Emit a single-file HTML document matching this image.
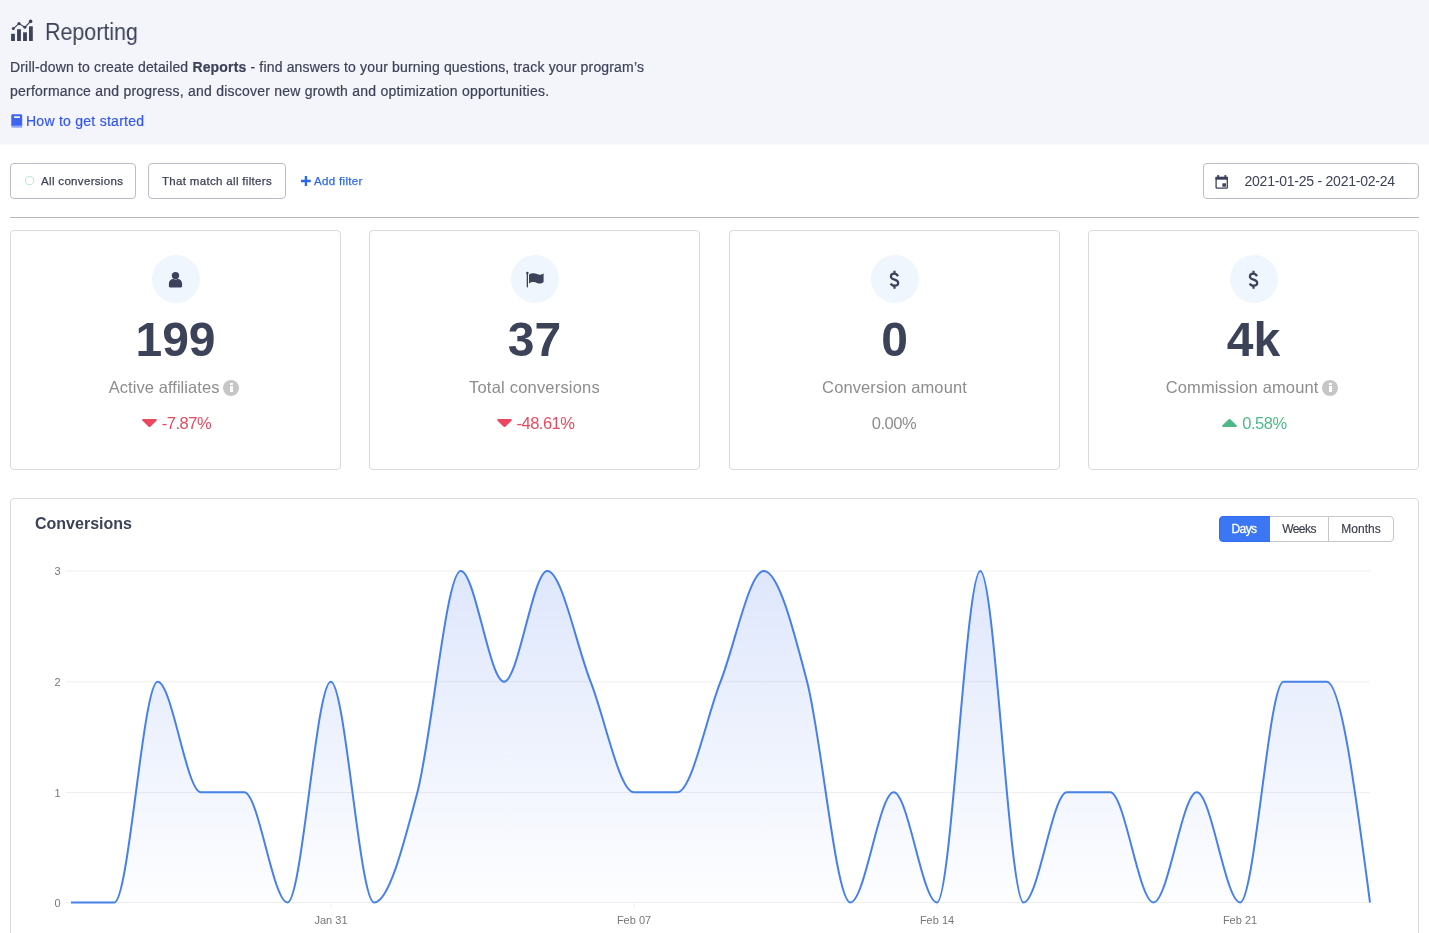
<!DOCTYPE html>
<html><head><meta charset="utf-8"><title>Reporting</title>
<style>
*{box-sizing:border-box;margin:0;padding:0}
html,body{width:1429px;height:933px;overflow:hidden;background:#fff}
body{font-family:"Liberation Sans",sans-serif;color:#3c4257;position:relative}
.abs{position:absolute;white-space:nowrap;will-change:transform}
#hdr{left:0;top:0;width:1429px;height:145px;background:linear-gradient(#f4f5fa,#f4f5fa 144px,#fafafd 144px)}
#title{left:45px;top:14.5px;font-size:23.5px;line-height:34px;color:#3c4257;transform:scaleX(0.912);transform-origin:0 0}
.desc{left:10px;font-size:14px;line-height:24px;color:#3c4257;-webkit-text-stroke:0.2px #3c4257}
#link{left:26px;top:109px;font-size:14px;line-height:24px;color:#3357f0;letter-spacing:0.26px;-webkit-text-stroke:0.2px #3357f0}
.btn{top:163px;height:36px;border:1px solid #babcc6;border-radius:4px;background:#fff;font-size:11.5px;line-height:34px;color:#3c4257;-webkit-text-stroke:0.25px #3c4257}
#hr{left:10px;top:217px;width:1409px;height:1px;background:#b9bac0}
.card{top:230px;width:331px;height:240px;border:1px solid #dadada;border-radius:4px;background:#fff}
.circ{position:absolute;left:50%;margin-left:-24px;top:24px;width:48px;height:48px;border-radius:50%;background:#eff6fe}
.num{position:absolute;left:0;right:0;text-align:center;top:81px;font-size:48px;line-height:56px;font-weight:bold;color:#3c4257}
.lbl{position:absolute;left:0;right:0;text-align:center;top:144px;font-size:16.5px;line-height:24px;color:#8d8d8d}
.pct{position:absolute;left:2px;right:0;text-align:center;top:180px;font-size:16.5px;line-height:24px;letter-spacing:-0.5px}
.red{color:#e9485e}.green{color:#4cb986}.grey{color:#8d8d8d}
.info{display:inline-block;vertical-align:top;width:16px;height:16px;border-radius:50%;background:#c6c6c6;margin-left:3.8px;margin-top:4.5px;position:relative}
.info:before{content:"";position:absolute;left:7px;top:3.6px;width:2.2px;height:2px;background:#fff}
.info:after{content:"";position:absolute;left:7px;top:6.7px;width:2.2px;height:6px;background:#fff}
.tri{display:inline-block;vertical-align:top;width:15px;height:8px;margin-right:5px;margin-top:8px}
#chart{left:10px;top:498px;width:1409px;height:460px;border:1px solid #dadada;border-radius:4px;background:#fff}
.seg{top:516px;height:26px;border:1px solid #c6c7cc;font-size:12px;line-height:25.6px;text-align:center;color:#383c4a;-webkit-text-stroke:0.15px #383c4a;background:#fff}
.ax{font-size:11px;line-height:12px;color:#777}
</style></head>
<body>
<div class="abs" id="hdr"></div>
<svg class="abs" style="left:0;top:0" width="60" height="60" viewBox="0 0 60 60">
<g fill="#3c4259"><rect x="11.1" y="33.8" width="3.8" height="7.2"/><rect x="17.1" y="29.2" width="3.8" height="11.8"/><rect x="23.1" y="32.3" width="3.8" height="8.7"/><rect x="29" y="26.3" width="3.8" height="14.7"/>
<circle cx="13.3" cy="28.6" r="1.5"/><circle cx="19" cy="23.6" r="1.6"/><circle cx="24.9" cy="27.2" r="1.5"/><circle cx="30.6" cy="21.4" r="1.8"/></g>
<polyline points="13.3,28.6 19,23.6 24.9,27.2 30.6,21.4" fill="none" stroke="#3c4259" stroke-width="1.1"/>
</svg>
<div class="abs" id="title">Reporting</div>
<div class="abs desc" style="top:55px;letter-spacing:0.165px">Drill-down to create detailed <b>Reports</b> - find answers to your burning questions, track your program’s</div>
<div class="abs desc" style="top:79px;letter-spacing:0.23px">performance and progress, and discover new growth and optimization opportunities.</div>
<svg class="abs" style="left:10px;top:112px" width="14" height="18" viewBox="10 112 14 18">
<path d="M12.6 114.2h8.3a1.3 1.3 0 0 1 1.3 1.3v9.6h-10.9v-9.6a1.3 1.3 0 0 1 1.3-1.3z" fill="#4064f2"/>
<path d="M11.3 125.1h10.9v2.7h-9.6a1.3 1.3 0 0 1-1.3-1.3z" fill="#94a8f6"/>
<rect x="11.3" y="124.4" width="10.9" height="1.2" fill="#4064f2"/>
<rect x="14" y="116.3" width="6" height="1.7" fill="#f4f5fa"/>
</svg>
<div class="abs" id="link">How to get started</div>

<div class="abs btn" style="left:10px;width:126px;padding-left:30px;letter-spacing:0.33px">All conversions</div>
<svg class="abs" style="left:24px;top:175px" width="12" height="12"><circle cx="5.6" cy="5.6" r="4.1" fill="none" stroke="#b5e5d0" stroke-width="1"/></svg>
<div class="abs btn" style="left:148px;width:138px;text-align:center;letter-spacing:0.33px">That match all filters</div>
<svg class="abs" style="left:300px;top:175px" width="12" height="12"><path d="M1 6h9.8M5.9 1.1v9.8" stroke="#2b67ec" stroke-width="2.3" fill="none"/></svg>
<div class="abs" style="left:314px;top:163px;font-size:11.5px;line-height:36px;color:#2b67ec;letter-spacing:0.33px;-webkit-text-stroke:0.25px #2b67ec">Add filter</div>
<div class="abs btn" style="left:1203px;width:216px;padding-left:40.5px;font-size:14px;line-height:34px;letter-spacing:-0.23px;-webkit-text-stroke:0">2021-01-25 - 2021-02-24</div>
<svg class="abs" style="left:1213px;top:173px" width="18" height="18" viewBox="1213 173 18 18">
<rect x="1216.1" y="177.5" width="11.2" height="10.7" rx="0.6" fill="none" stroke="#3c4259" stroke-width="1.3"/>
<rect x="1215.5" y="176.9" width="12.4" height="2.8" fill="#3c4259"/>
<rect x="1217.2" y="175.1" width="1.9" height="2.5" fill="#3c4259"/><rect x="1224.4" y="175.1" width="1.9" height="2.5" fill="#3c4259"/>
<rect x="1222.4" y="183.3" width="3.5" height="3.5" fill="#3c4259"/>
</svg>
<div class="abs" id="hr"></div>

<div class="abs card" style="left:10px"><div class="circ"></div><div class="num">199</div><div class="lbl" style="left:-3px;letter-spacing:0.07px">Active affiliates<span class="info"></span></div>
<div class="pct red"><svg class="tri" viewBox="0 0 15 8"><path d="M1.2 0h12.6a1 1 0 0 1 .7 1.7l-6.2 6a1.1 1.1 0 0 1-1.6 0l-6.2-6a1 1 0 0 1 .7-1.7z" fill="#e9485e"/></svg>-7.87%</div></div>
<div class="abs card" style="left:369px"><div class="circ"></div><div class="num">37</div><div class="lbl" style="letter-spacing:0.2px">Total conversions</div>
<div class="pct red"><svg class="tri" viewBox="0 0 15 8"><path d="M1.2 0h12.6a1 1 0 0 1 .7 1.7l-6.2 6a1.1 1.1 0 0 1-1.6 0l-6.2-6a1 1 0 0 1 .7-1.7z" fill="#e9485e"/></svg>-48.61%</div></div>
<div class="abs card" style="left:729px"><div class="circ"></div><div class="num">0</div><div class="lbl" style="letter-spacing:0.1px">Conversion amount</div><div class="pct grey" style="left:-1px">0.00%</div></div>
<div class="abs card" style="left:1088px"><div class="circ"></div><div class="num">4k</div><div class="lbl" style="left:-3px;letter-spacing:0.15px">Commission amount<span class="info"></span></div>
<div class="pct green"><svg class="tri" viewBox="0 0 15 8"><path d="M1.2 8h12.6a1 1 0 0 0 .7-1.7l-6.2-6a1.1 1.1 0 0 0-1.6 0l-6.2 6a1 1 0 0 0 .7 1.7z" fill="#4cb986"/></svg>0.58%</div></div>

<svg class="abs" style="left:0;top:250px" width="1429" height="60" viewBox="0 250 1429 60">
<g fill="#3c4259">
<circle cx="175.5" cy="275.6" r="3.7"/>
<path d="M168.9 286.200V283.500C168.900 280.800 171 278.900 173.300 278.900H173.700C174.300 279.300 174.900 279.500 175.500 279.500C176.100 279.500 176.700 279.300 177.300 278.900H177.700C180 278.900 182.100 280.800 182.100 283.500V286.200C182.100 286.900 181.600 287.400 180.900 287.400H170.100C169.400 287.400 168.900 286.900 168.900 286.200z"/>
<rect x="526.7" y="272.4" width="1.3" height="15" rx="0.6"/><circle cx="527.35" cy="273" r="1.2"/>
<path d="M529 274.600C531.500 272.800 534.500 272.800 537 274C539.500 275.200 541.500 274.800 543.600 273.200V282C541.500 283.600 539.500 284 537 282.900C534.500 281.700 531.500 281.700 529 283.500z"/>
</g>
<g fill="none" stroke="#3c4259" stroke-width="2.2">
<path id="dol" d="M898 276.300C897.100 274.500 895.700 273.700 894.200 273.700C892.100 273.700 890.900 274.900 890.900 276.400C890.900 278.200 892.400 278.900 894.600 279.600C896.800 280.300 898.200 281.100 898.200 283C898.200 284.700 896.800 285.700 894.800 285.700C893 285.700 891.500 285 890.700 283.400M894.500 270.800V273.900M894.500 285.500V288.800"/>
<use href="#dol" x="359"/>
</g>
</svg>

<div class="abs" id="chart"></div>
<div class="abs" style="left:35px;top:512px;font-size:16px;line-height:24px;font-weight:bold;color:#3c4257">Conversions</div>
<div class="abs seg" style="left:1219px;width:52px;border-radius:4px 0 0 4px;background:#3b76f5;border-color:#316df0;color:#fff;letter-spacing:-0.6px;padding-right:2px;-webkit-text-stroke:0.3px #fff">Days</div>
<div class="abs seg" style="left:1270px;width:59px;border-left:0;letter-spacing:-0.55px">Weeks</div>
<div class="abs seg" style="left:1328px;width:66px;border-radius:0 4px 4px 0">Months</div>

<svg class="abs" style="left:0;top:0" width="1429" height="933" viewBox="0 0 1429 933">
<defs><linearGradient id="g" x1="0" y1="571" x2="0" y2="903" gradientUnits="userSpaceOnUse">
<stop offset="0" stop-color="#4a78ec" stop-opacity="0.18"/><stop offset="1" stop-color="#4a78ec" stop-opacity="0.01"/></linearGradient></defs>
<g stroke="#efefef" stroke-width="1">
<line x1="66" y1="571" x2="1370" y2="571"/><line x1="66" y1="681.8" x2="1370" y2="681.8"/><line x1="66" y1="792.5" x2="1370" y2="792.5"/><line x1="66" y1="902.5" x2="1370" y2="902.5"/>
<line x1="330.8" y1="903" x2="330.8" y2="908"/><line x1="633.9" y1="903" x2="633.9" y2="908"/><line x1="937" y1="903" x2="937" y2="908"/><line x1="1240.1" y1="903" x2="1240.1" y2="908"/>
</g>
<path d="M71.00 902.50C85.43 902.50 99.87 902.50 114.30 902.50C128.73 902.50 143.17 681.70 157.60 681.70C172.03 681.70 186.47 792.30 200.90 792.30C215.33 792.30 229.77 792.30 244.20 792.30C258.63 792.30 273.07 902.50 287.50 902.50C301.93 902.50 316.37 681.70 330.80 681.70C345.23 681.70 359.67 902.50 374.10 902.50C388.53 902.50 402.97 847.55 417.40 792.30C431.83 737.05 446.27 571.00 460.70 571.00C475.13 571.00 489.57 681.70 504.00 681.70C518.43 681.70 532.87 571.00 547.30 571.00C561.73 571.00 576.17 644.82 590.60 681.70C605.03 718.58 619.47 792.30 633.90 792.30C648.33 792.30 662.77 792.30 677.20 792.30C691.63 792.30 706.07 718.58 720.50 681.70C734.93 644.82 749.37 571.00 763.80 571.00C778.23 571.00 792.67 626.45 807.10 681.70C821.53 736.95 835.97 902.50 850.40 902.50C864.83 902.50 879.27 792.30 893.70 792.30C908.13 792.30 922.57 902.50 937.00 902.50C951.43 902.50 965.87 571.00 980.30 571.00C994.73 571.00 1009.17 902.50 1023.60 902.50C1038.03 902.50 1052.47 792.30 1066.90 792.30C1081.33 792.30 1095.77 792.30 1110.20 792.30C1124.63 792.30 1139.07 902.50 1153.50 902.50C1167.93 902.50 1182.37 792.30 1196.80 792.30C1211.23 792.30 1225.67 902.50 1240.10 902.50C1254.53 902.50 1268.97 681.70 1283.40 681.70C1297.83 681.70 1312.27 681.70 1326.70 681.70C1341.13 681.70 1355.57 792.10 1370.00 902.50L1370 902.5L71 902.5Z" fill="url(#g)"/>
<path d="M71.00 902.50C85.43 902.50 99.87 902.50 114.30 902.50C128.73 902.50 143.17 681.70 157.60 681.70C172.03 681.70 186.47 792.30 200.90 792.30C215.33 792.30 229.77 792.30 244.20 792.30C258.63 792.30 273.07 902.50 287.50 902.50C301.93 902.50 316.37 681.70 330.80 681.70C345.23 681.70 359.67 902.50 374.10 902.50C388.53 902.50 402.97 847.55 417.40 792.30C431.83 737.05 446.27 571.00 460.70 571.00C475.13 571.00 489.57 681.70 504.00 681.70C518.43 681.70 532.87 571.00 547.30 571.00C561.73 571.00 576.17 644.82 590.60 681.70C605.03 718.58 619.47 792.30 633.90 792.30C648.33 792.30 662.77 792.30 677.20 792.30C691.63 792.30 706.07 718.58 720.50 681.70C734.93 644.82 749.37 571.00 763.80 571.00C778.23 571.00 792.67 626.45 807.10 681.70C821.53 736.95 835.97 902.50 850.40 902.50C864.83 902.50 879.27 792.30 893.70 792.30C908.13 792.30 922.57 902.50 937.00 902.50C951.43 902.50 965.87 571.00 980.30 571.00C994.73 571.00 1009.17 902.50 1023.60 902.50C1038.03 902.50 1052.47 792.30 1066.90 792.30C1081.33 792.30 1095.77 792.30 1110.20 792.30C1124.63 792.30 1139.07 902.50 1153.50 902.50C1167.93 902.50 1182.37 792.30 1196.80 792.30C1211.23 792.30 1225.67 902.50 1240.10 902.50C1254.53 902.50 1268.97 681.70 1283.40 681.70C1297.83 681.70 1312.27 681.70 1326.70 681.70C1341.13 681.70 1355.57 792.10 1370.00 902.50" fill="none" stroke="#4680e8" stroke-width="2"/>
</svg>
<div class="abs ax" style="left:40px;width:20.5px;text-align:right;top:565px">3</div>
<div class="abs ax" style="left:40px;width:20.5px;text-align:right;top:675.5px">2</div>
<div class="abs ax" style="left:40px;width:20.5px;text-align:right;top:787px">1</div>
<div class="abs ax" style="left:40px;width:20.5px;text-align:right;top:896.5px">0</div>
<div class="abs ax" style="left:280.800px;width:100px;text-align:center;top:914px">Jan 31</div>
<div class="abs ax" style="left:583.900px;width:100px;text-align:center;top:914px">Feb 07</div>
<div class="abs ax" style="left:887px;width:100px;text-align:center;top:914px">Feb 14</div>
<div class="abs ax" style="left:1190.100px;width:100px;text-align:center;top:914px">Feb 21</div>
</body></html>
